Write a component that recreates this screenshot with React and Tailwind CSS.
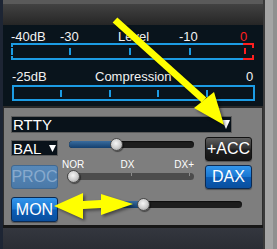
import React from 'react';

function Tri({ w = 8, h = 9 }) {
  return (
    <svg width={w} height={h} viewBox={`0 0 ${w} ${h}`} className="shrink-0">
      <polygon points={`0,0 ${w},0 ${w / 2},${h}`} fill="#ffffff" />
    </svg>
  );
}

function Thumb({ left }) {
  return (
    <div
      className="absolute top-0 w-[13px] h-[13px] rounded-full border border-[#4a4a4a] bg-[radial-gradient(circle_at_45%_40%,#f6f6f6_0%,#cfcfcf_50%,#8e8e8e_100%)] shadow-[1px_1px_1px_rgba(0,0,0,0.45)]"
      style={{ left: left - 6.5 }}
    />
  );
}

function Slider({ width, pos, disabled, ticks = [] }) {
  return (
    <div className="relative h-[13px] flex items-center shrink-0" style={{ width }}>
      <div
        className={`relative h-[7px] w-full rounded-full overflow-hidden ${disabled ? 'bg-[#4c4c4c]' : 'bg-[#1d1d1d] shadow-[inset_0_1px_1px_rgba(0,0,0,0.6)]'}`}
      >
        {!disabled && (
          <div
            className="h-full bg-[linear-gradient(to_bottom,#3a6c9e,#133f6e)]"
            style={{ width: pos }}
          />
        )}
        {ticks.map(t => (
          <div key={t} className="absolute top-0 w-[1px] h-[3px] bg-[#8c8c8c]" style={{ left: t }} />
        ))}
      </div>
      <Thumb left={pos} />
    </div>
  );
}

const blueBtn = 'w-[47px] rounded-[3px] border border-[#0b2a52] bg-[linear-gradient(to_bottom,#3496ec_0%,#1a78d2_48%,#0b5db6_52%,#0a4f9e_100%)] text-white text-[16px] flex items-center justify-center shadow-[0_1px_1px_rgba(0,0,0,0.35)]';

export default function App() {
  return (
    <div className="relative flex w-[277px] h-[249px] overflow-hidden bg-[#7e7e7e] font-['Liberation_Sans',sans-serif]">
      <div className="w-[3px] bg-[#1d2534]" />

      <div className="w-[260px] flex flex-col">
        <div className="h-[4px] bg-[#5a5a5a]" />
        <div className="h-[21px] bg-[linear-gradient(to_bottom,#424242,#262626)]" />

        {/* meter */}
        <div className="h-[81px] bg-[#09141c] flex flex-col text-[#f2f2f2]">
          <div className="mt-[5px] h-[14px] leading-[14px] text-[13px] flex pl-[8px]">
            <div className="w-[49px]">-40dB</div>
            <div className="w-[58px]">-30</div>
            <div className="w-[61px]">Level</div>
            <div className="w-[61px]">-10</div>
            <div className="text-[#ff1f1f]">0</div>
          </div>
          <svg width="260" height="17" className="mt-[-1px] shrink-0">
            <g fill="#1c9ce4">
              <rect x="8" y="0" width="232" height="2" />
              <rect x="8" y="15" width="232" height="2" />
              <rect x="8" y="2" width="2" height="2" />
              <rect x="8" y="13" width="2" height="2" />
              <rect x="8" y="5" width="2" height="7" />
              <rect x="66" y="5" width="2" height="7" />
              <rect x="126" y="5" width="2" height="7" />
              <rect x="186" y="5" width="2" height="7" />
            </g>
            <g fill="#ff1f1f">
              <rect x="240" y="0" width="11" height="2" />
              <rect x="249" y="2" width="2" height="3" />
              <rect x="241" y="5" width="2" height="6" />
              <rect x="249" y="12" width="2" height="3" />
              <rect x="240" y="15" width="11" height="2" />
            </g>
          </svg>
          <div className="mt-[10px] h-[14px] leading-[14px] text-[13px] flex pl-[9px]">
            <div className="w-[83px]">-25dB</div>
            <div className="w-[151px]">Compression</div>
            <div>0</div>
          </div>
          <svg width="260" height="16" className="mt-[1px] shrink-0">
            <g fill="#1c9ce4">
              <rect x="9" y="0" width="243" height="2" />
              <rect x="9" y="14" width="243" height="2" />
              <rect x="9" y="0" width="2" height="16" />
              <rect x="57" y="5" width="2" height="7" />
              <rect x="106" y="5" width="2" height="7" />
              <rect x="154" y="5" width="2" height="7" />
              <rect x="203" y="5" width="2" height="7" />
              <rect x="250" y="0" width="2" height="16" />
            </g>
          </svg>
        </div>
        <div className="h-[2px] bg-[#2a2a2a]" />

        {/* controls */}
        <div className="h-[117px] border-x border-[#2e2e2e] pl-[7px] pt-[8px] flex flex-col text-white">
          <div className="h-[17px] w-[221px] border border-[#5c5c5c] bg-[#09121a] flex items-center pl-[1px] pr-[1px]">
            <span className="text-[15px] leading-[15px]">RTTY</span>
            <div className="ml-auto"><Tri w={8} h={9} /></div>
          </div>

          <div className="mt-[4px] h-[24px] flex items-start">
            <div className="mt-[3px] h-[16px] w-[47px] border border-[#5c5c5c] bg-[#09121a] flex items-center pl-[1px] pr-[1px]">
              <span className="text-[15px] leading-[15px]">BAL</span>
              <div className="ml-auto"><Tri w={7} h={7} /></div>
            </div>
            <div className="ml-[11px] mt-[1px]">
              <Slider width={125} pos={47} />
            </div>
            <div className="ml-[11px] w-[47px] h-[24px] rounded-[3px] border border-[#121212] bg-[linear-gradient(to_bottom,#5f5f5f_0%,#333333_45%,#1e1e1e_55%,#151515_100%)] text-[16px] flex items-center justify-center shadow-[0_1px_1px_rgba(0,0,0,0.35)]">
              +ACC
            </div>
          </div>

          <div className="mt-[4px] h-[24px] flex items-start">
            <div className="w-[47px] h-[24px] rounded-[3px] border border-[#3f6891] bg-[linear-gradient(to_bottom,#5889b9,#4a79a8)] text-[#88aacd] text-[16px] flex items-center justify-center">
              PROC
            </div>
            <div className="ml-[9px] mt-[-5px] w-[127px] flex flex-col">
              <div className="ml-[-5px] h-[10px] leading-[10px] text-[10px] flex">
                <div className="w-[62px]">NOR</div>
                <div className="w-[57px]">DX</div>
                <div>DX+</div>
              </div>
              <Slider width={127} pos={6} disabled ticks={[64, 122]} />
            </div>
            <div className={`ml-[11px] h-[24px] ${blueBtn}`}>DAX</div>
          </div>

          <div className="mt-[8px] h-[25px] flex items-start">
            <div className={`h-[25px] ${blueBtn}`}>MON</div>
            <div className="ml-[11px] mt-[1px]">
              <Slider width={173} pos={74} />
            </div>
          </div>
        </div>
        <div className="h-[3px] bg-[#171717]" />
        <div className="flex-1 bg-[linear-gradient(to_bottom,#34373f,#2a2d34)]" />
      </div>

      <div className="w-[2px] bg-[#3a3a3a]" />
      <div className="w-[8px] bg-[#a5a5a5]" />
      <div className="w-[4px] bg-[#909090]" />

      <svg
        width="277"
        height="249"
        className="absolute inset-0 pointer-events-none drop-shadow-[2px_2px_1.5px_rgba(0,0,0,0.45)]"
      >
        <line x1="115" y1="20" x2="204" y2="100" stroke="#ffff00" strokeWidth="7" />
        <polygon points="224,125 214,92 194,108" fill="#ffff00" />
        <polygon
          points="54,206 83,193 83,201 101,200 101,194 133,204 101,215 101,208 83,209 83,219"
          fill="#ffff00"
        />
      </svg>
    </div>
  );
}
